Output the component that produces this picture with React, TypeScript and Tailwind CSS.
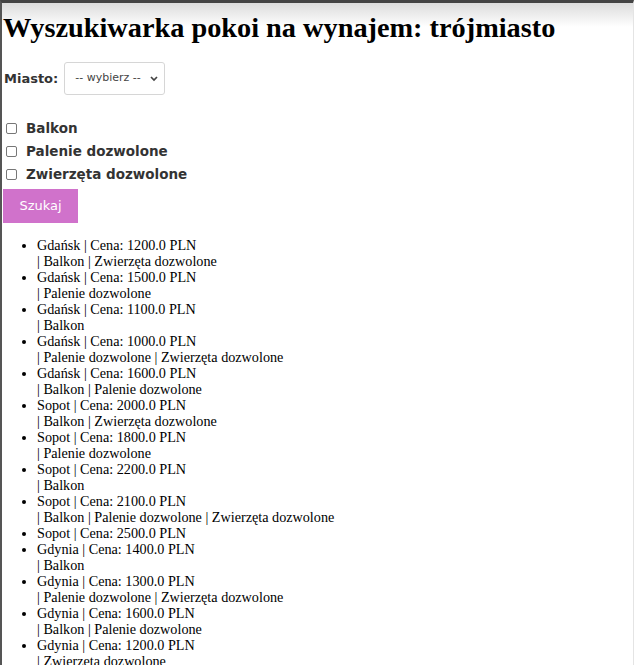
import React from 'react';

const rooms = [
  { city: 'Gdańsk', price: '1200.0', extras: ['Balkon', 'Zwierzęta dozwolone'] },
  { city: 'Gdańsk', price: '1500.0', extras: ['Palenie dozwolone'] },
  { city: 'Gdańsk', price: '1100.0', extras: ['Balkon'] },
  { city: 'Gdańsk', price: '1000.0', extras: ['Palenie dozwolone', 'Zwierzęta dozwolone'] },
  { city: 'Gdańsk', price: '1600.0', extras: ['Balkon', 'Palenie dozwolone'] },
  { city: 'Sopot', price: '2000.0', extras: ['Balkon', 'Zwierzęta dozwolone'] },
  { city: 'Sopot', price: '1800.0', extras: ['Palenie dozwolone'] },
  { city: 'Sopot', price: '2200.0', extras: ['Balkon'] },
  { city: 'Sopot', price: '2100.0', extras: ['Balkon', 'Palenie dozwolone', 'Zwierzęta dozwolone'] },
  { city: 'Sopot', price: '2500.0', extras: [] },
  { city: 'Gdynia', price: '1400.0', extras: ['Balkon'] },
  { city: 'Gdynia', price: '1300.0', extras: ['Palenie dozwolone', 'Zwierzęta dozwolone'] },
  { city: 'Gdynia', price: '1600.0', extras: ['Balkon', 'Palenie dozwolone'] },
  { city: 'Gdynia', price: '1200.0', extras: ['Zwierzęta dozwolone'] },
];

const filters = ['Balkon', 'Palenie dozwolone', 'Zwierzęta dozwolone'];

export default function App() {
  return (
    <div className="h-[665px] overflow-hidden border-t-[3px] border-l-2 border-r border-t-[#444] border-l-[#555] border-r-[#e4e4e4] bg-[linear-gradient(#dcdcdc,#ffffff_24px)] text-black">
      <div className="pl-[2px] pt-[9px]">
        {/* Header */}
        <h1 className="text-[28.3px] leading-[32px] font-bold font-['Liberation_Serif',serif] whitespace-nowrap -ml-[1px]">
          Wyszukiwarka pokoi na wynajem: trójmiasto
        </h1>

        {/* City select */}
        <div className="mt-[18px] flex items-center gap-[6px] font-['DejaVu_Sans',sans-serif]">
          <span className="text-[13px] font-bold text-[#333]">Miasto:</span>
          <div className="relative">
            <select className="appearance-none w-[101px] h-[33px] bg-white border border-[#d6d6d6] rounded-[3px] pl-[10px] text-[11px] text-[#444] font-['DejaVu_Sans',sans-serif]">
              <option>-- wybierz --</option>
            </select>
            <svg className="absolute right-[7px] top-[14px] pointer-events-none" width="8" height="6" viewBox="0 0 8 6">
              <path d="M1 1l3 3 3-3" fill="none" stroke="#444" strokeWidth="1.7" />
            </svg>
          </div>
        </div>

        {/* Checkboxes */}
        <div className="mt-[24px] flex flex-col gap-[5px] font-['DejaVu_Sans',sans-serif]">
          {filters.map(f => (
            <label key={f} className="flex items-center h-[18px] gap-[9px] pl-[2px]">
              <input type="checkbox" className="appearance-none w-[11px] h-[11px] border border-[#777] rounded-[2px] bg-white" />
              <span className="text-[13.5px] font-bold text-[#333]">{f}</span>
            </label>
          ))}
        </div>

        <button className="mt-[6px] -ml-[1px] w-[75px] h-[34px] bg-[#d072cb] text-white text-[13px] font-['DejaVu_Sans',sans-serif]">
          Szukaj
        </button>

        {/* Results */}
        <ul className="mt-[14px] list-disc pl-[33px] font-['Liberation_Serif',serif] text-[14.2px] leading-[16px]">
          {rooms.map((r, i) => (
            <li key={i}>
              {r.city} | Cena: {r.price} PLN
              {r.extras.length > 0 && <br />}
              {r.extras.map(e => `| ${e}`).join(' ')}
            </li>
          ))}
        </ul>
      </div>
    </div>
  );
}
